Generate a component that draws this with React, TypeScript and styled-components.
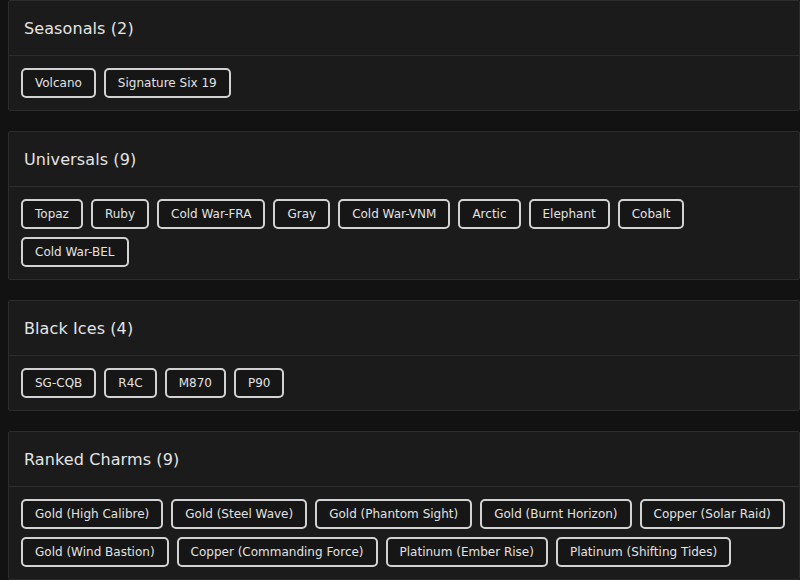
import styled, { createGlobalStyle } from 'styled-components';

const Global = createGlobalStyle`
    html, body { margin: 0; padding: 0; background: #121212; overflow: hidden; }
    body { font-family: "DejaVu Sans", "Noto Sans", sans-serif; }
`;

const Page = styled.div`
    display: flex;
    flex-direction: column;
    gap: 20px;
    padding-left: 8px;
    width: 792px;
`;

const Card = styled.section`
    background: #1b1b1b;
    border: 1px solid #2c2c2c;
    border-radius: 2px;
`;

const Header = styled.div`
    display: flex;
    align-items: center;
    height: 54px;
    padding: 0 15px;
    border-bottom: 1px solid #2c2c2c;
`;

const Title = styled.h2`
    margin: 0;
    font-size: 16px;
    font-weight: 500;
    color: #e4e4e4;
    letter-spacing: 0.1px;
`;

const Chips = styled.div`
    display: flex;
    flex-wrap: wrap;
    gap: 8px;
    padding: 12px;
`;

const Chip = styled.span`
    display: inline-flex;
    align-items: center;
    box-sizing: border-box;
    height: 30px;
    padding: 0 12px;
    background: #161616;
    border: 2px solid #d2d2d2;
    border-radius: 5px;
    color: #e2e2e2;
    font-size: 12px;
    white-space: nowrap;
`;

const groups: { name: string; items: string[] }[] = [
    { name: 'Seasonals', items: ['Volcano', 'Signature Six 19'] },
    {
        name: 'Universals',
        items: ['Topaz', 'Ruby', 'Cold War-FRA', 'Gray', 'Cold War-VNM', 'Arctic', 'Elephant', 'Cobalt', 'Cold War-BEL'],
    },
    { name: 'Black Ices', items: ['SG-CQB', 'R4C', 'M870', 'P90'] },
    {
        name: 'Ranked Charms',
        items: [
            'Gold (High Calibre)',
            'Gold (Steel Wave)',
            'Gold (Phantom Sight)',
            'Gold (Burnt Horizon)',
            'Copper (Solar Raid)',
            'Gold (Wind Bastion)',
            'Copper (Commanding Force)',
            'Platinum (Ember Rise)',
            'Platinum (Shifting Tides)',
        ],
    },
];

export default () => {
    return (
        <>
            <Global />
            <Page>
                {groups.map((g) => (
                    <Card key={g.name}>
                        <Header>
                            <Title>
                                {g.name} ({g.items.length})
                            </Title>
                        </Header>
                        <Chips>
                            {g.items.map((it) => (
                                <Chip key={it}>{it}</Chip>
                            ))}
                        </Chips>
                    </Card>
                ))}
            </Page>
        </>
    );
};
